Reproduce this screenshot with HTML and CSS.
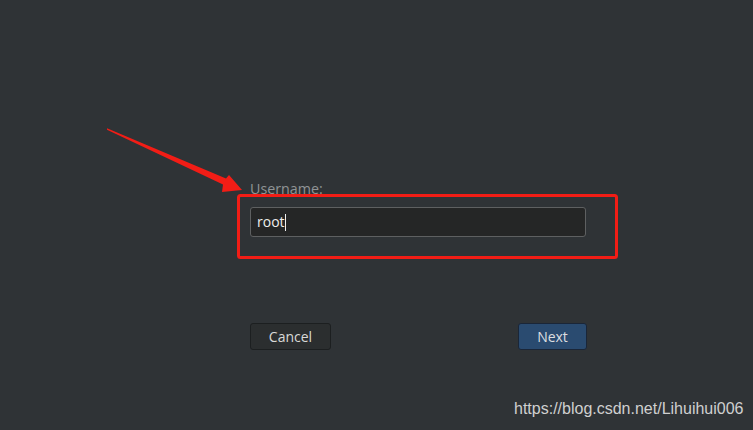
FILE: index.html
```html
<!DOCTYPE html>
<html>
<head>
<meta charset="utf-8">
<link rel="stylesheet" href="styles.css">
</head>
<body>
<div class="page">
  <div class="content">
    <div class="field">
      <div class="label">Username:</div>
      <div class="input"><span class="value">root</span><span class="cursor"></span></div>
    </div>
    <div class="buttons">
      <button class="btn">Cancel</button>
      <button class="btn primary">Next</button>
    </div>
  </div>
  <svg class="annot" width="753" height="430" viewBox="0 0 753 430">
    <polygon points="107,128.3 226,178.5 229,175 242,190 222,192 223,184.5 107,129.7" fill="#f21d16"/>
    <rect x="238.5" y="195.5" width="378" height="62" rx="2" fill="none" stroke="#f21d16" stroke-width="3"/>
  </svg>
  <div class="watermark">https://blog.csdn.net/Lihuihui006</div>
</div>
</body>
</html>
```
FILE: styles.css
```css
html, body {
  margin: 0;
  padding: 0;
}
body {
  background: #2f3336;
  font-family: "Open Sans", "Noto Sans", sans-serif;
}
.page {
  position: relative;
  width: 753px;
  height: 430px;
  overflow: hidden;
  background: #2f3336;
}
.content {
  display: flex;
  flex-direction: column;
  width: 336px;
  padding: 179px 0 0 250px;
}
.field {
  display: flex;
  flex-direction: column;
  gap: 8px;
}
.label {
  font-size: 14.3px;
  line-height: 20px;
  color: #909395;
}
.input {
  box-sizing: border-box;
  height: 30px;
  background: #252626;
  border: 1px solid #5e6061;
  border-radius: 3px;
  display: flex;
  align-items: center;
  padding-left: 6px;
  color: #eeeeec;
  font-size: 14px;
}
.value {
  line-height: 18px;
}
.cursor {
  display: inline-block;
  width: 1px;
  height: 17px;
  background: #f0f0f0;
  margin-left: 0;
}
.buttons {
  display: flex;
  justify-content: space-between;
  margin-top: 86px;
}
.btn {
  box-sizing: border-box;
  height: 27px;
  width: 81px;
  border: 1px solid #1c1f20;
  border-radius: 3px;
  background: #2b2e2f;
  color: #d9d9d7;
  font-family: "Open Sans", "Noto Sans", sans-serif;
  font-size: 14px;
  padding: 0;
}
.btn.primary {
  width: 69px;
  margin-right: -1px;
  background: #2a4b70;
  border-color: #1a2638;
  color: #dcdee0;
}
.annot {
  position: absolute;
  left: 0;
  top: 0;
}
.watermark {
  position: absolute;
  left: 514px;
  top: 400px;
  font-family: "Liberation Sans", Arial, sans-serif;
  font-size: 16px;
  color: #cfd0d0;
}
```
